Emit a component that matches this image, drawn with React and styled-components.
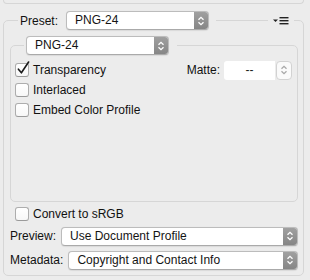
import React from "react";
import styled, { createGlobalStyle } from "styled-components";

const Global = createGlobalStyle`
  html, body { margin: 0; padding: 0; background: #ececec; }
  body { font-family: "Liberation Sans", Arial, Helvetica, sans-serif; font-size: 12px; color: #111; }
  * { box-sizing: border-box; }
`;

const Panel = styled.div`
  width: 310px;
  height: 280px;
  background: #ececec;
  overflow: hidden;
`;

const TopStub = styled.div`
  height: 4px;
  margin: 0 6px 0 3px;
  border: 1px solid #d6d6d6;
  border-top: none;
  border-radius: 0 0 5px 5px;
`;

const Group = styled.fieldset`
  margin: ${(p) => p.$mt}px ${(p) => p.$mr}px 0 ${(p) => p.$ml}px;
  padding: ${(p) => p.$pad};
  border: 1px solid #d6d6d6;
  border-radius: 5px;
  min-width: 0;
`;

const Legend = styled.legend`
  display: flex;
  align-items: center;
  padding: 0 ${(p) => p.$pr}px 0 2px;
  margin-left: ${(p) => p.$ml}px;
  width: ${(p) => (p.$w ? `${p.$w}px` : "auto")};
  height: 19px;
`;

const LegendLabel = styled.span`
  margin-right: 8px;
  white-space: nowrap;
`;

const Rule = styled.div`
  flex: 1;
  height: 1px;
  background: #d6d6d6;
  margin: 0 5px 0 7px;
`;

const PopupBox = styled.div`
  display: flex;
  width: ${(p) => (p.$w ? `${p.$w}px` : "auto")};
  flex: ${(p) => (p.$w ? "none" : "1")};
  height: 19px;
  background: #fff;
  border: 1px solid #bcbcbc;
  border-bottom-color: #aaa;
  border-radius: 4px;
  overflow: hidden;
  box-shadow: 0 0.5px 1px rgba(0, 0, 0, 0.08);
`;

const PopupText = styled.span`
  flex: 1;
  padding-left: 8px;
  line-height: 17px;
  white-space: nowrap;
  overflow: hidden;
  color: #141414;
`;

const Stepper = styled.div`
  width: 14px;
  display: flex;
  align-items: center;
  justify-content: center;
  background: linear-gradient(#a0a0a0, #868686);
`;

const MatteBox = styled.div`
  display: flex;
  width: 68px;
  height: 19px;
  gap: 1px;
`;

const MatteField = styled.div`
  flex: 1;
  background: #fff;
  border-radius: 3px 0 0 3px;
  text-align: center;
  line-height: 19px;
  color: #222;
`;

const MatteStepper = styled.div`
  width: 16px;
  display: flex;
  align-items: center;
  justify-content: center;
  background: #fafafa;
  border: 1px solid #d2d2d2;
  border-radius: 4px;
`;

const Body = styled.div`
  height: 141px;
  display: flex;
  flex-direction: column;
`;

const Row = styled.div`
  display: flex;
  align-items: center;
  height: 20px;
  margin-top: ${(p) => p.$mt || 0}px;
  padding-left: ${(p) => p.$pl || 0}px;
  gap: ${(p) => p.$gap || 4}px;
`;

const Label = styled.span`
  white-space: nowrap;
`;

const Spacer = styled.div`
  flex: 1;
`;

const Box = styled.span`
  position: relative;
  width: 14px;
  height: 14px;
  flex: none;
  background: linear-gradient(#fff, #f7f7f7);
  border: 1px solid #adadad;
  border-bottom-color: #9a9a9a;
  border-radius: 3px;
`;

const Check = styled.svg`
  position: absolute;
  left: 0px;
  top: -3px;
  overflow: visible;
`;

const Chevrons = ({ color }) => (
  <svg width="8" height="12" viewBox="0 0 8 12">
    <path d="M1.5 4.8 L4 2.3 L6.5 4.8 M1.5 7.2 L4 9.7 L6.5 7.2" fill="none" stroke={color} strokeWidth="1.3" />
  </svg>
);

const Popup = ({ text, w }) => (
  <PopupBox $w={w}>
    <PopupText>{text}</PopupText>
    <Stepper>
      <Chevrons color="#fff" />
    </Stepper>
  </PopupBox>
);

const Checkbox = ({ label, checked, mt, pl }) => (
  <Row $mt={mt} $pl={pl}>
    <Box>
      {checked && (
        <Check width="14" height="14" viewBox="0 0 14 14">
          <path d="M2.4 8.2 L5.4 11.8 L12.6 1" fill="none" stroke="#1b1b1b" strokeWidth="1.6" strokeLinecap="round" strokeLinejoin="round" />
        </Check>
      )}
    </Box>
    <Label>{label}</Label>
  </Row>
);

const MenuIcon = () => (
  <svg width="16" height="8" viewBox="0 0 16 8">
    <path d="M0 2.5 H5 L2.5 5 Z" fill="#222" />
    <rect x="6.5" y="0" width="9" height="1.4" fill="#222" />
    <rect x="6.5" y="3" width="9" height="1.4" fill="#222" />
    <rect x="6.5" y="6" width="9" height="1.4" fill="#222" />
  </svg>
);

export default function App() {
  return (
    <>
      <Global />
      <Panel>
        <TopStub />
        <Group $mt={7} $mr={6} $ml={3} $pad="6px 5px 5px 6px">
          <Legend $ml={8} $pr={5} $w={276}>
            <LegendLabel>Preset:</LegendLabel>
            <Popup text="PNG-24" w={143} />
            <Rule />
            <MenuIcon />
          </Legend>
          <Group $mt={0} $mr={0} $ml={0} $pad="5px 5px 0 4px">
            <Legend $ml={9} $pr={8}>
              <Popup text="PNG-24" w={143} />
            </Legend>
            <Body>
              <Row>
                <Checkbox label="Transparency" checked />
                <Spacer />
                <Label>Matte:</Label>
                <MatteBox>
                  <MatteField>--</MatteField>
                  <MatteStepper>
                    <Chevrons color="#a8a8a8" />
                  </MatteStepper>
                </MatteBox>
              </Row>
              <Checkbox label="Interlaced" />
              <Checkbox label="Embed Color Profile" />
            </Body>
          </Group>
          <Checkbox label="Convert to sRGB" mt={2} pl={5} />
          <Row $mt={2} $gap={5}>
            <Label>Preview:</Label>
            <Popup text="Use Document Profile" />
          </Row>
          <Row $mt={4} $gap={5}>
            <Label>Metadata:</Label>
            <Popup text="Copyright and Contact Info" />
          </Row>
        </Group>
      </Panel>
    </>
  );
}
